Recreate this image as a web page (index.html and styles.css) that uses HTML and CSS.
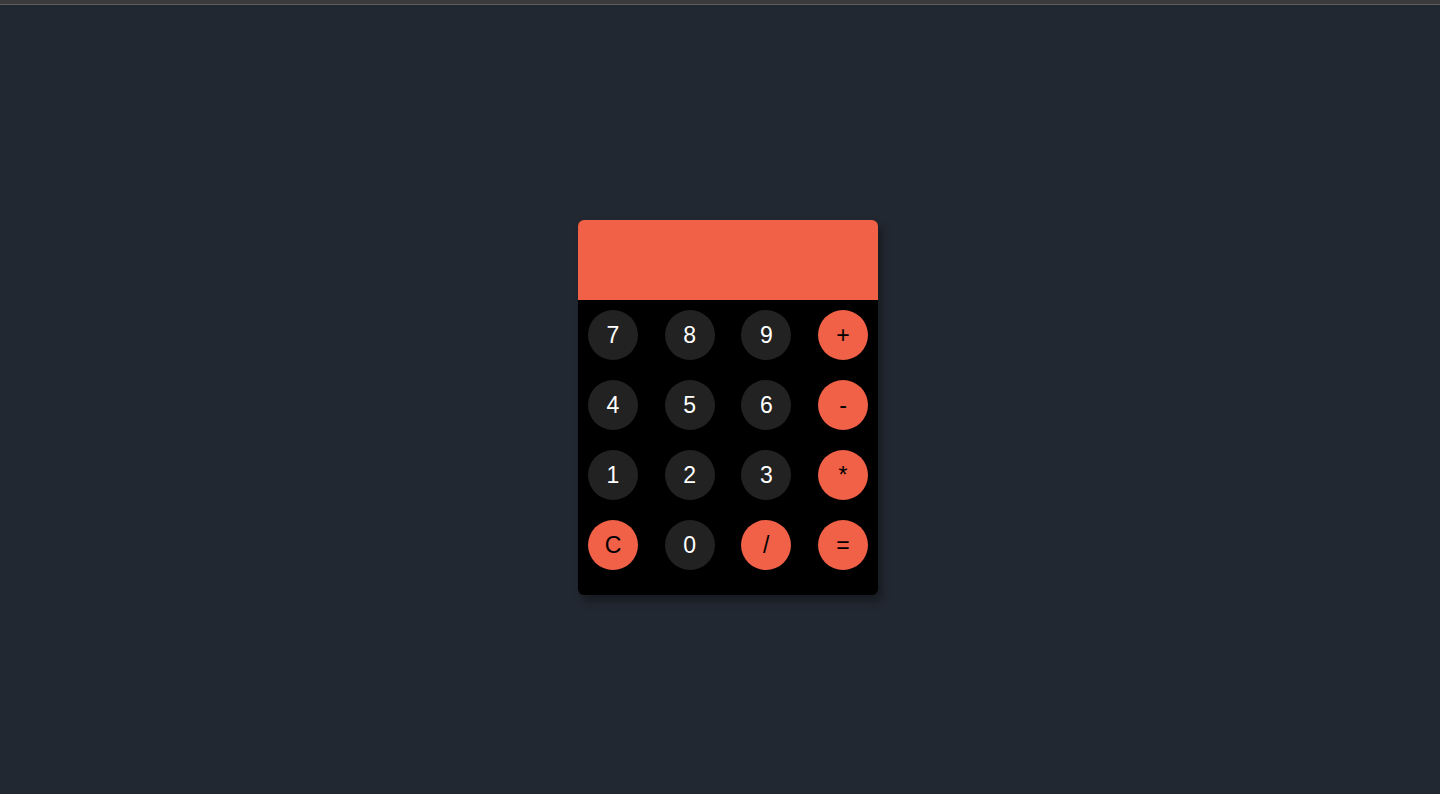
FILE: index.html
```html
<!DOCTYPE html>
<html lang="en">
<head>
<meta charset="utf-8">
<title>Calculator</title>
<link rel="stylesheet" href="styles.css">
</head>
<body>
<div class="topbar"></div>
<main class="stage">
  <div class="calc">
    <div class="display"></div>
    <div class="keys">
      <button class="key">7</button>
      <button class="key">8</button>
      <button class="key">9</button>
      <button class="key op">+</button>
      <button class="key">4</button>
      <button class="key">5</button>
      <button class="key">6</button>
      <button class="key op">-</button>
      <button class="key">1</button>
      <button class="key">2</button>
      <button class="key">3</button>
      <button class="key op">*</button>
      <button class="key op">C</button>
      <button class="key">0</button>
      <button class="key op">/</button>
      <button class="key op">=</button>
    </div>
  </div>
</main>
</body>
</html>
```
FILE: styles.css
```css
* { box-sizing: border-box; }
html, body {
  margin: 0;
  padding: 0;
  height: 100%;
}
body {
  background: #222831;
  font-family: "Liberation Sans", Arial, sans-serif;
  display: flex;
  flex-direction: column;
}
.topbar {
  height: 5px;
  background: #3b3b3d;
  border-bottom: 1px solid #5c5c5e;
  flex: none;
}
.stage {
  flex: 1;
  display: flex;
  justify-content: center;
  padding-top: 215px;
  padding-left: 16px;
}
.calc {
  width: 300px;
  height: 375px;
  background: #000;
  border-radius: 6px;
  overflow: hidden;
  box-shadow: 4px 6px 8px rgba(0, 0, 0, 0.35);
}
.display {
  height: 80px;
  background: #f06148;
}
.keys {
  display: grid;
  grid-template-columns: repeat(4, 50px);
  justify-content: space-between;
  row-gap: 20px;
  padding: 10px 10px 25px;
}
.key {
  width: 50px;
  height: 50px;
  border: none;
  border-radius: 50%;
  background: #222222;
  color: #fff;
  font-family: "Liberation Sans", Arial, sans-serif;
  font-size: 23px;
  padding: 0;
  display: flex;
  align-items: center;
  justify-content: center;
}
.key.op {
  background: #f06148;
  color: #000;
}
```
